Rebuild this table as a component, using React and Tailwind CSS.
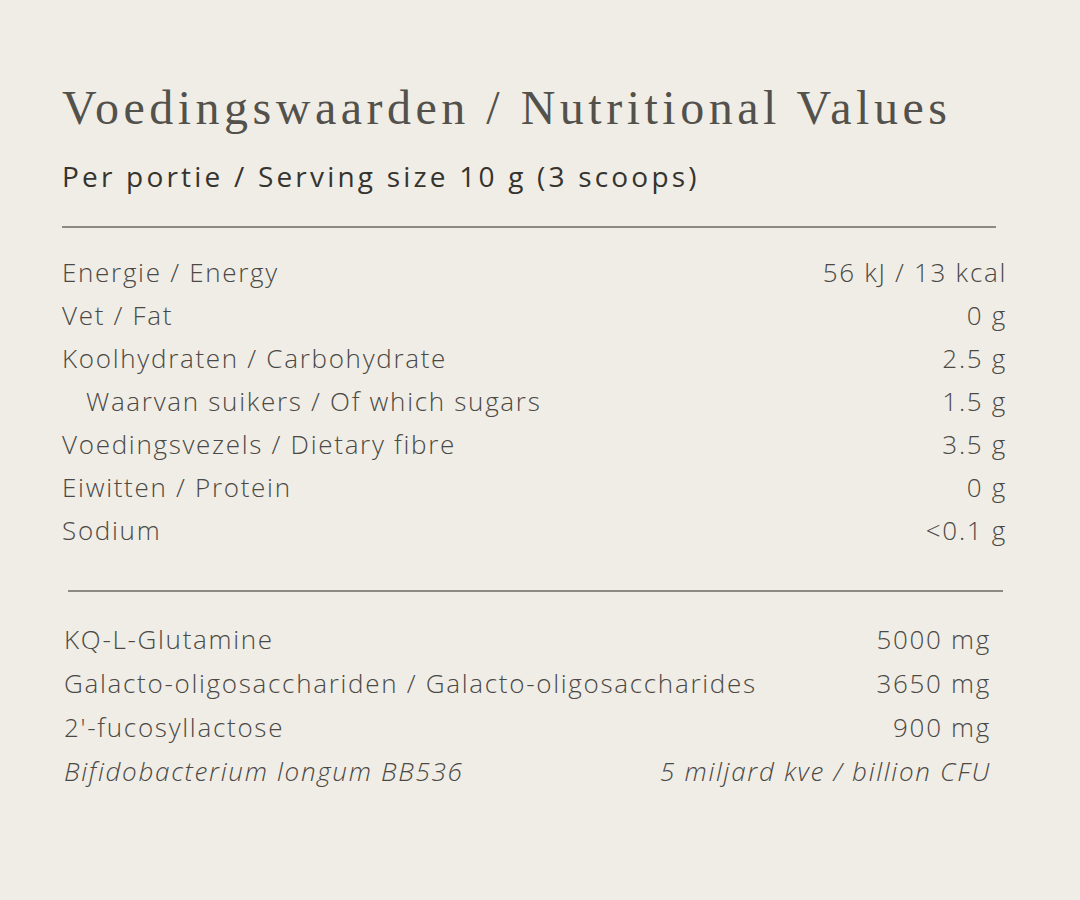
import React from 'react';

const nutrition = [
  { label: 'Energie / Energy', value: '56 kJ / 13 kcal' },
  { label: 'Vet / Fat', value: '0 g' },
  { label: 'Koolhydraten / Carbohydrate', value: '2.5 g' },
  { label: 'Waarvan suikers / Of which sugars', value: '1.5 g', indent: true },
  { label: 'Voedingsvezels / Dietary fibre', value: '3.5 g' },
  { label: 'Eiwitten / Protein', value: '0 g' },
  { label: 'Sodium', value: '<0.1 g' },
];

const actives = [
  { label: 'KQ-L-Glutamine', value: '5000 mg' },
  { label: 'Galacto-oligosacchariden / Galacto-oligosaccharides', value: '3650 mg' },
  { label: "2'-fucosyllactose", value: '900 mg' },
  { label: 'Bifidobacterium longum BB536', value: '5 miljard kve / billion CFU', italic: true },
];

export default function App() {
  return (
    <div className="min-h-[900px] w-[1080px] bg-[#f0ede6] text-[#4a4945] font-['Open_Sans','Lato',sans-serif]">
      <div className="pt-[80px] pl-[62px]">
        <h1 className="font-['Liberation_Serif',serif] font-normal text-[48px] leading-[56px] tracking-[4.5px] text-[#53514c]">
          Voedingswaarden / Nutritional Values
        </h1>
        <p className="mt-[20px] text-[28px] leading-[40px] tracking-[3.2px] font-medium text-[#35342f]">
          Per portie / Serving size 10 g (3 scoops)
        </p>
      </div>

      {/* Nutrition block */}
      <div className="ml-[62px] w-[934px] mt-[30px] h-[2px] bg-[#8c8a83]" />
      <div className="pl-[62px] pr-[73px] pt-[23px] flex flex-col">
        {nutrition.map(row => (
          <div key={row.label} className="flex justify-between items-center h-[43px] text-[26px] tracking-[1.7px] font-light">
            <span className={row.indent ? 'pl-[24px]' : ''}>{row.label}</span>
            <span>{row.value}</span>
          </div>
        ))}
      </div>

      {/* Actives block */}
      <div className="ml-[68px] w-[935px] mt-[38px] h-[2px] bg-[#8c8a83]" />
      <div className="pl-[64px] pr-[89px] pt-[25px] flex flex-col">
        {actives.map(row => (
          <div key={row.label} className={`flex justify-between items-center h-[44px] text-[26px] tracking-[1.7px] font-light ${row.italic ? 'italic' : ''}`}>
            <span>{row.label}</span>
            <span>{row.value}</span>
          </div>
        ))}
      </div>
    </div>
  );
}
